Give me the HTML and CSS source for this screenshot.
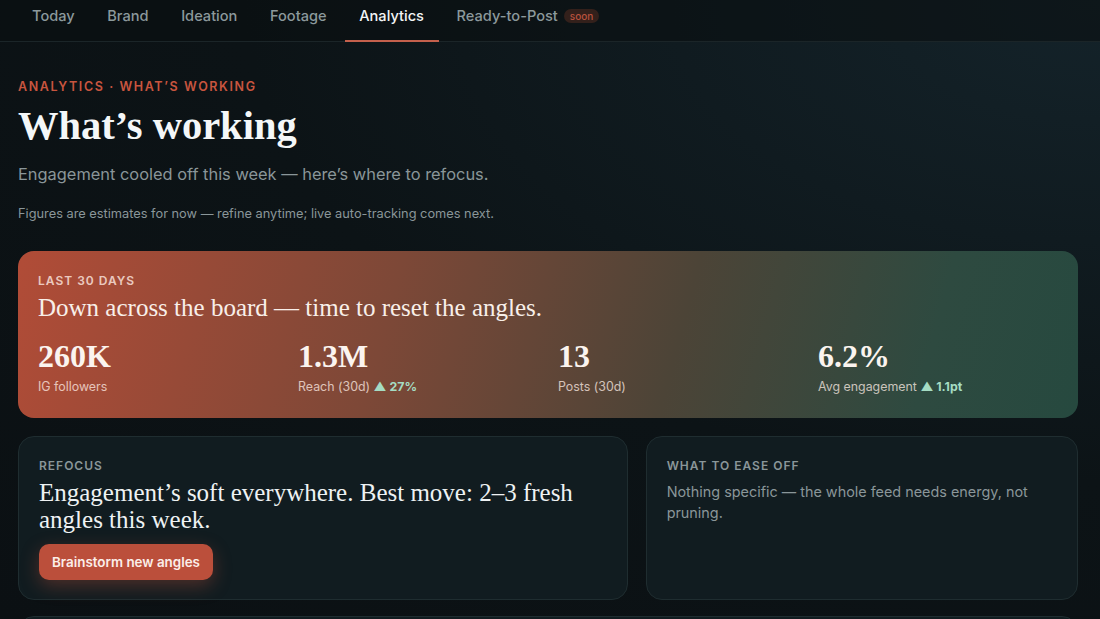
FILE: index.html
```html
<!DOCTYPE html>
<html lang="en">
<head>
    <meta charset="UTF-8">
    <meta name="viewport" content="width=device-width, initial-scale=1.0">
    <title>Analytics · What's working</title>
    <link rel="stylesheet" href="styles.css">
</head>
<body>
    <nav class="tabs">
        <a class="tab">Today</a>
        <a class="tab">Brand</a>
        <a class="tab">Ideation</a>
        <a class="tab">Footage</a>
        <a class="tab active">Analytics</a>
        <a class="tab">Ready-to-Post <span class="soon">soon</span></a>
    </nav>

    <main class="page">
        <div class="eyebrow">Analytics · What’s working</div>
        <h1>What’s working</h1>
        <p class="lead">Engagement cooled off this week — here’s where to refocus.</p>
        <p class="note">Figures are estimates for now — refine anytime; live auto-tracking comes next.</p>

        <section class="hero">
            <div class="hero-label">Last 30 days</div>
            <h2 class="hero-title">Down across the board — time to reset the angles.</h2>
            <div class="stats">
                <div class="stat">
                    <div class="stat-value">260K</div>
                    <div class="stat-label">IG followers</div>
                </div>
                <div class="stat">
                    <div class="stat-value">1.3M</div>
                    <div class="stat-label">Reach (30d) <span class="delta">▲ 27%</span></div>
                </div>
                <div class="stat">
                    <div class="stat-value">13</div>
                    <div class="stat-label">Posts (30d)</div>
                </div>
                <div class="stat">
                    <div class="stat-value">6.2%</div>
                    <div class="stat-label">Avg engagement <span class="delta">▲ 1.1pt</span></div>
                </div>
            </div>
        </section>

        <div class="cards">
            <section class="card">
                <div class="card-label">Refocus</div>
                <h3 class="card-title">Engagement’s soft everywhere. Best move: 2–3 fresh angles this week.</h3>
                <button class="primary">Brainstorm new angles</button>
            </section>
            <section class="card">
                <div class="card-label">What to ease off</div>
                <p class="card-text">Nothing specific — the whole feed needs energy, not pruning.</p>
            </section>
        </div>

        <section class="card next"></section>
    </main>
</body>
</html>
```

FILE: styles.css
```css
html, body {
    margin: 0;
    padding: 0;
}

body {
    background: radial-gradient(ellipse at 100% 0%, #14232a 0%, #0c1316 55%, #0b1013 100%);
    background-color: #0b1013;
    font-family: Inter, 'Noto Sans', sans-serif;
    color: #e9eef0;
    height: 619px;
    overflow: hidden;
}

.tabs {
    display: flex;
    align-items: stretch;
    height: 42px;
    padding: 0 18px;
    gap: 3.6px;
    border-bottom: 1px solid #1b2528;
    background: rgba(10, 15, 17, 0.6);
    box-sizing: border-box;
}

.tab {
    display: flex;
    align-items: center;
    gap: 6px;
    padding: 0 15px 8px 14px;
    font-size: 14.6px;
    font-weight: 500;
    color: #8c999c;
    border-bottom: 2px solid transparent;
    margin-bottom: -1px;
}

.tab.active {
    color: #f3f5f6;
    border-bottom-color: #c4604c;
}

.soon {
    font-size: 10px;
    font-weight: 500;
    color: #b9523e;
    background: #33201b;
    border-radius: 8px;
    padding: 1px 6px;
}

.page {
    padding: 37px 22px 0 18px;
}

.eyebrow {
    font-size: 12.5px;
    font-weight: 600;
    letter-spacing: 1.6px;
    text-transform: uppercase;
    color: #c8553f;
}

h1 {
    font-family: 'Liberation Serif', serif;
    font-weight: 700;
    font-size: 40.5px;
    line-height: 52px;
    margin: 6px 0 0;
    color: #f4f7f8;
}

.lead {
    font-size: 16.4px;
    color: #8a9699;
    margin: 12px 0 0;
}

.note {
    font-size: 12.8px;
    color: #8a9699;
    margin: 22px 0 0;
}

.hero {
    margin-top: 30px;
    border-radius: 16px;
    padding: 22px 20px 24px;
    background: linear-gradient(105deg, #b14c37 0%, #7d4837 35%, #4c4437 62%, #2e4a40 85%, #26493f 100%);
}

.hero-label {
    font-size: 12px;
    font-weight: 600;
    letter-spacing: 1px;
    text-transform: uppercase;
    color: rgba(255, 236, 228, 0.8);
}

.hero-title {
    font-family: 'Liberation Serif', serif;
    font-weight: 400;
    font-size: 25px;
    line-height: 30px;
    margin: 5px 0 0;
    color: #f8efe9;
}

.stats {
    display: grid;
    grid-template-columns: repeat(4, 1fr);
    gap: 20px;
    margin-top: 15px;
}

.stat-value {
    font-family: 'Liberation Serif', serif;
    font-weight: 700;
    font-size: 32px;
    line-height: 36px;
    color: #fbf4ef;
}

.stat-label {
    font-size: 12.4px;
    margin-top: 5px;
    color: rgba(255, 238, 230, 0.75);
}

.delta {
    color: #a5dcc3;
    font-weight: 700;
}

.cards {
    display: grid;
    grid-template-columns: 1.41fr 1fr;
    gap: 18px;
    margin-top: 18px;
}

.card {
    background: #111c20;
    border: 1px solid #1f2d30;
    border-radius: 16px;
    padding: 21px 20px 17px;
    min-height: 164px;
    box-sizing: border-box;
}

.card-label {
    font-size: 12px;
    font-weight: 600;
    letter-spacing: 1px;
    text-transform: uppercase;
    color: #8a9699;
}

.card-title {
    font-family: 'Liberation Serif', serif;
    font-weight: 400;
    font-size: 25px;
    line-height: 27px;
    margin: 6px 0 0;
    color: #eef2f3;
}

.card-text {
    font-size: 14.4px;
    line-height: 21px;
    color: #8a9699;
    margin: 8px 0 0;
}

.primary {
    margin-top: 11px;
    font-family: Inter, sans-serif;
    font-size: 13.4px;
    font-weight: 600;
    color: #fbeee9;
    background: #bb4f3b;
    border: none;
    border-radius: 10px;
    padding: 0 13px;
    height: 36px;
    box-shadow: 0 6px 18px rgba(190, 80, 58, 0.35);
}

.next {
    margin-top: 16px;
}
```
